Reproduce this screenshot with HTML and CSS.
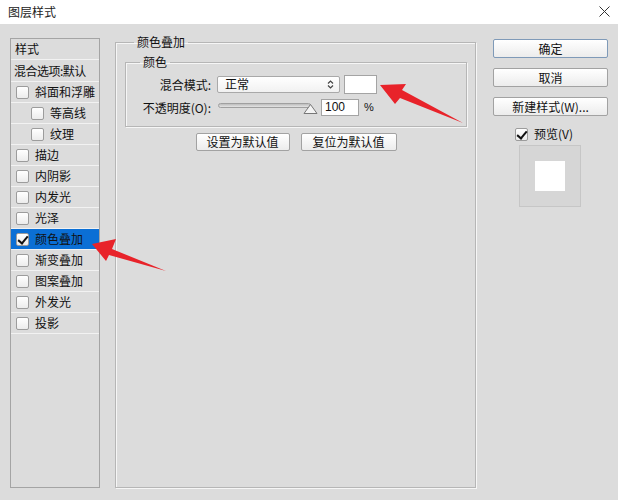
FILE: index.html
```html
<!DOCTYPE html>
<html lang="zh">
<head>
    <meta charset="UTF-8">
    <title>图层样式</title>
    <link rel="stylesheet" href="styles.css">
</head>
<body>
    <div class="window">
        <div class="titlebar">
            <span class="title">图层样式</span>
            <svg class="close" width="11" height="11" viewBox="0 0 11 11"><path d="M0.5 0.5 L10.5 10.5 M10.5 0.5 L0.5 10.5" stroke="#333" stroke-width="1"/></svg>
        </div>

        <div class="dialog">
            <!-- 左侧样式列表 -->
            <ul class="style-list">
                <li class="list-head">样式</li>
                <li class="list-head blend">混合选项:默认</li>
                <li class="item"><span class="check"></span>斜面和浮雕</li>
                <li class="item sub"><span class="check"></span>等高线</li>
                <li class="item sub"><span class="check"></span>纹理</li>
                <li class="item"><span class="check"></span>描边</li>
                <li class="item"><span class="check"></span>内阴影</li>
                <li class="item"><span class="check"></span>内发光</li>
                <li class="item"><span class="check"></span>光泽</li>
                <li class="item selected"><span class="check checked"></span>颜色叠加</li>
                <li class="item"><span class="check"></span>渐变叠加</li>
                <li class="item"><span class="check"></span>图案叠加</li>
                <li class="item"><span class="check"></span>外发光</li>
                <li class="item"><span class="check"></span>投影</li>
            </ul>

            <!-- 中间设置区 -->
            <fieldset class="group main-group">
                <legend>颜色叠加</legend>
                <fieldset class="group color-group">
                    <legend>颜色</legend>
                    <div class="field-row">
                        <label class="field-label">混合模式:</label>
                        <div class="select">
                            <span>正常</span>
                            <svg width="7" height="9" viewBox="0 0 7 9"><path d="M1 3.5 L3.5 1 L6 3.5 M1 5.5 L3.5 8 L6 5.5" fill="none" stroke="#444" stroke-width="1.2"/></svg>
                        </div>
                        <div class="swatch"></div>
                    </div>
                    <div class="field-row">
                        <label class="field-label">不透明度(O):</label>
                        <div class="slider">
                            <div class="track"></div>
                            <svg class="thumb" width="15" height="10" viewBox="0 0 15 10"><path d="M7.5 0.5 L14 9.5 L1 9.5 Z" fill="#f4f4f4" stroke="#777"/></svg>
                        </div>
                        <div class="num-input">100</div>
                        <span class="unit">%</span>
                    </div>
                </fieldset>
                <div class="default-buttons">
                    <button class="btn">设置为默认值</button>
                    <button class="btn">复位为默认值</button>
                </div>
            </fieldset>

            <!-- 右侧按钮 -->
            <div class="side">
                <button class="btn side-btn primary">确定</button>
                <button class="btn side-btn">取消</button>
                <button class="btn side-btn">新建样式(W)...</button>
                <div class="preview-check"><span class="check checked"></span>预览(V)</div>
                <div class="preview-box"><div class="preview-inner"></div></div>
            </div>
        </div>

        <!-- 红色箭头标注 -->
        <svg class="arrows" width="618" height="500" viewBox="0 0 618 500">
            <polygon points="380,85 406,84 402,90 463,123 400,98 395,104" fill="#e8232a"/>
            <polygon points="92,244 116,239 112,249 166,271 109,255 106,261" fill="#e8232a"/>
        </svg>
    </div>
</body>
</html>
```

FILE: styles.css
```css
* {
    margin: 0;
    padding: 0;
    box-sizing: border-box;
}

body {
    font-family: "Noto Sans CJK SC", "Liberation Sans", sans-serif;
    font-size: 12px;
    color: #111;
    background-color: #dcdcdc;
}

.window {
    position: relative;
    width: 618px;
    height: 500px;
    overflow: hidden;
}

.titlebar {
    height: 24px;
    background-color: #ffffff;
    display: flex;
    align-items: center;
    justify-content: space-between;
    padding: 0 8px 2px 8px;
}

.title {
    font-size: 12px;
    color: #222;
}

.close {
    margin-top: 1px;
}

.dialog {
    display: flex;
    align-items: flex-start;
    padding: 14px 0 0 10px;
}

/* 左侧列表 */
.style-list {
    list-style: none;
    width: 90px;
    height: 450px;
    border: 1px solid #a4a4a4;
    background-color: #dcdcdc;
}

.style-list li {
    display: flex;
    align-items: center;
    height: 21px;
    border-bottom: 1px solid #f2f2f2;
    white-space: nowrap;
    line-height: 1;
}

.list-head {
    padding-left: 4px;
}

.list-head.blend {
    height: 22px;
    padding-left: 3px;
    letter-spacing: -0.5px;
}

.item {
    padding-left: 5px;
}

.item.sub {
    padding-left: 20px;
}

.item.selected {
    background-color: #0b6fd5;
}

.check {
    display: inline-block;
    width: 13px;
    height: 13px;
    border: 1px solid #9c9c9c;
    border-radius: 2px;
    background: linear-gradient(#ffffff, #ececec);
    margin-right: 6px;
    position: relative;
    flex-shrink: 0;
}

.check.checked::after {
    content: "";
    position: absolute;
    left: 3px;
    top: 0px;
    width: 4px;
    height: 8px;
    border: solid #111;
    border-width: 0 2px 2px 0;
    transform: rotate(40deg);
}

/* 分组框 */
.group {
    border: 1px solid #b6b6b6;
    box-shadow: 1px 1px 0 #f6f6f6, inset 1px 1px 0 #f6f6f6;
}

.group legend {
    padding: 0 3px;
    line-height: 14px;
}

.main-group {
    margin: -3px 0 0 15px;
    width: 361px;
    height: 453px;
}

.main-group > legend {
    margin-left: 18px;
}

.color-group {
    margin: 6px 0 0 9px;
    width: 342px;
    height: 72px;
    padding-top: 5px;
}

.color-group > legend {
    margin-left: 14px;
}

.field-row {
    display: flex;
    align-items: center;
    height: 20px;
    margin-bottom: 3px;
}

.field-label {
    width: 86px;
    text-align: right;
    padding-right: 1px;
    white-space: nowrap;
}

.select {
    margin-left: 5px;
    width: 123px;
    height: 17px;
    border: 1px solid #a9a9a9;
    border-radius: 2px;
    background: linear-gradient(#ffffff, #f1f1f1);
    display: flex;
    align-items: center;
    justify-content: space-between;
    padding: 0 5px 0 7px;
    line-height: 1;
}

.swatch {
    margin-left: 4px;
    width: 33px;
    height: 19px;
    border: 1px solid #a4a4a4;
    background-color: #ffffff;
}

.slider {
    position: relative;
    margin-left: 6px;
    width: 97px;
    height: 16px;
}

.track {
    position: absolute;
    left: 0;
    right: 4px;
    top: 4px;
    height: 5px;
    border: 1px solid #a0a0a0;
    border-radius: 3px;
    background: linear-gradient(#bdbdbd, #e4e4e4);
}

.thumb {
    position: absolute;
    right: -3px;
    top: 5px;
}

.num-input {
    margin-left: 6px;
    width: 38px;
    height: 17px;
    border: 1px solid #a4a4a4;
    background-color: #ffffff;
    padding-left: 3px;
    line-height: 15px;
    font-family: "Liberation Sans", sans-serif;
}

.unit {
    margin-left: 5px;
    font-family: "Liberation Sans", sans-serif;
    font-size: 11px;
}

/* 按钮 */
.btn {
    font-family: "Noto Sans CJK SC", sans-serif;
    font-size: 12px;
    color: #111;
    height: 18px;
    border: 1px solid #a2a2a2;
    border-radius: 2px;
    background: linear-gradient(#ffffff, #ececec);
    line-height: 1;
    cursor: pointer;
}

.default-buttons {
    display: flex;
    justify-content: center;
    gap: 11px;
    margin-top: 6px;
    padding-left: 1px;
}

.default-buttons .btn:first-child {
    width: 94px;
}

.default-buttons .btn:last-child {
    width: 96px;
}

.side {
    margin-left: 17px;
    margin-top: 1px;
    width: 115px;
    display: flex;
    flex-direction: column;
}

.side-btn {
    width: 115px;
    height: 19px;
    margin-bottom: 10px;
}

.side-btn.primary {
    border-color: #7f9ab8;
}

.preview-check {
    display: flex;
    align-items: center;
    margin: 1px 0 0 22px;
    height: 14px;
    line-height: 1;
}

.preview-box {
    margin: 4px 0 0 26px;
    width: 62px;
    height: 62px;
    border: 1px solid #c6c6c6;
    background-color: #d6d6d6;
    display: flex;
    align-items: center;
    justify-content: center;
}

.preview-inner {
    width: 30px;
    height: 30px;
    background-color: #ffffff;
}

.arrows {
    position: absolute;
    left: 0;
    top: 0;
    pointer-events: none;
}
```
